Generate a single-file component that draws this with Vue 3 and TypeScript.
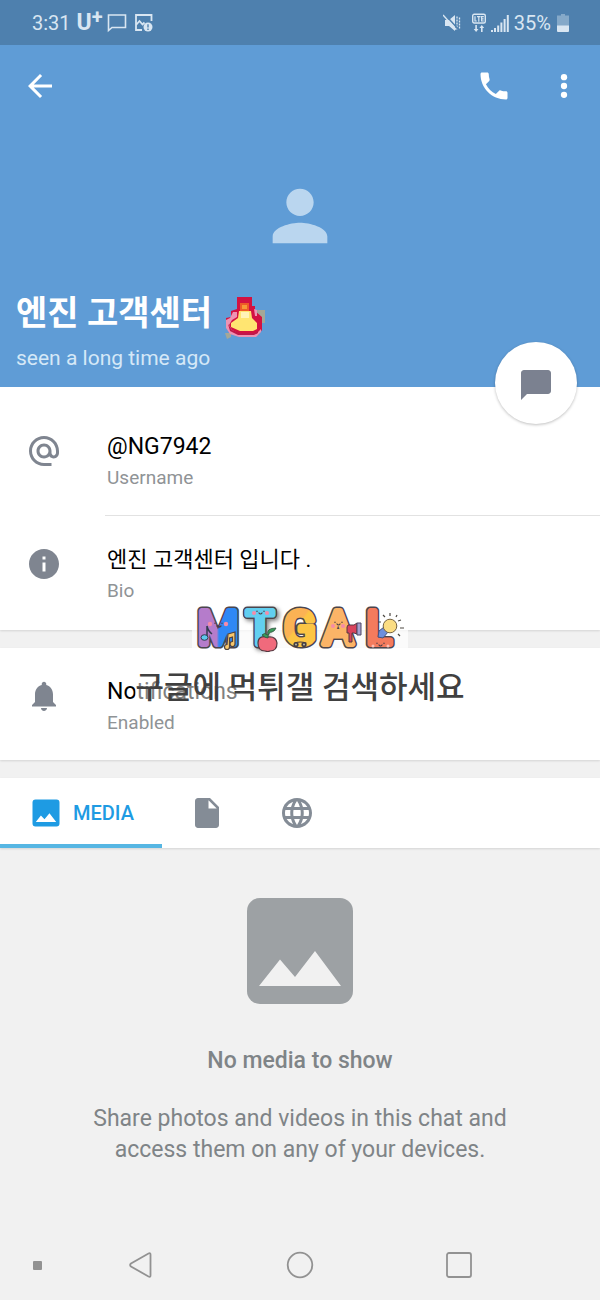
<script setup lang="ts">
import { ref } from 'vue'

interface InfoRow {
  icon: string
  title: string
  label: string
}

const ICONS = {
  at: 'M12 1.95c-5.52 0-10 4.48-10 10s4.48 10 10 10h5v-2h-5c-4.34 0-8-3.66-8-8s3.66-8 8-8 8 3.66 8 8v1.43c0 .79-.71 1.57-1.5 1.57s-1.5-.78-1.5-1.57v-1.43c0-2.76-2.24-5-5-5s-5 2.24-5 5 2.24 5 5 5c1.38 0 2.64-.56 3.54-1.47.65.89 1.77 1.47 2.96 1.47 1.97 0 3.5-1.6 3.5-3.57v-1.43c0-5.52-4.48-10-10-10zm0 13c-1.66 0-3-1.34-3-3s1.34-3 3-3 3 1.34 3 3-1.34 3-3 3z',
  info: 'M12 2C6.48 2 2 6.48 2 12s4.48 10 10 10 10-4.48 10-10S17.52 2 12 2zm1 15h-2v-6h2v6zm0-8h-2V7h2v2z',
  bell: 'M12 22c1.1 0 2-.9 2-2h-4c0 1.1.89 2 2 2zm6-6v-5c0-3.07-1.64-5.64-4.5-6.32V4c0-.83-.67-1.5-1.5-1.5s-1.5.67-1.5 1.5v.68C7.63 5.36 6 7.92 6 11v5l-2 2v1h16v-1l-2-2z',
  image: 'M5 3h14a2 2 0 0 1 2 2v14a2 2 0 0 1-2 2H5a2 2 0 0 1-2-2V5a2 2 0 0 1 2-2zM5.2 18H18.8L14.3 12.2 11 16.2 8.6 13.6z',
  file: 'M6 2c-1.1 0-2 .9-2 2v16c0 1.1.9 2 2 2h12c1.1 0 2-.9 2-2V8l-6-6H6zm7 7V3.5L18.5 9H13z',
  globe: 'M11.99 2C6.47 2 2 6.48 2 12s4.47 10 9.99 10C17.52 22 22 17.52 22 12S17.52 2 11.99 2zm6.93 6h-2.95a15.65 15.65 0 0 0-1.38-3.56A8.03 8.03 0 0 1 18.92 8zM12 4.04c.83 1.2 1.48 2.53 1.91 3.96h-3.82c.43-1.43 1.08-2.76 1.91-3.96zM4.26 14C4.1 13.36 4 12.69 4 12s.1-1.36.26-2h3.38c-.08.66-.14 1.32-.14 2s.06 1.34.14 2H4.26zm.82 2h2.95c.32 1.25.78 2.45 1.38 3.56A7.987 7.987 0 0 1 5.08 16zm2.95-8H5.08a7.987 7.987 0 0 1 4.33-3.56A15.65 15.65 0 0 0 8.03 8zM12 19.96c-.83-1.2-1.48-2.53-1.91-3.96h3.82c-.43 1.43-1.08 2.76-1.91 3.96zM14.34 14H9.66c-.09-.66-.16-1.32-.16-2s.07-1.35.16-2h4.68c.09.65.16 1.32.16 2s-.07 1.34-.16 2zm.25 5.56c.6-1.11 1.06-2.31 1.38-3.56h2.95a8.03 8.03 0 0 1-4.33 3.56zM16.36 14c.08-.66.14-1.32.14-2s-.06-1.34-.14-2h3.38c.16.64.26 1.31.26 2s-.1 1.36-.26 2h-3.38z',
}

const profile: InfoRow[] = [
  { icon: ICONS.at, title: '@NG7942', label: 'Username' },
  { icon: ICONS.info, title: '엔진 고객센터 입니다 .', label: 'Bio' },
]
const notifications: InfoRow = { icon: ICONS.bell, title: 'Notifications', label: 'Enabled' }

const tabs = [
  { id: 'media', text: 'MEDIA', icon: ICONS.image },
  { id: 'files', text: '', icon: ICONS.file },
  { id: 'links', text: '', icon: ICONS.globe },
]
const activeTab = ref('media')
</script>

<template>
  <div class="page">
    <div class="statusbar">
      <span class="clock">3:31</span>
      <span class="carrier">U<sup>+</sup></span>
      <svg class="s-chat" width="20" height="20" viewBox="0 0 20 20" fill="none" stroke="currentColor" stroke-width="1.6">
        <path d="M1.5 2h17v12.500h-13.500l-3.500 3z" />
      </svg>
      <svg class="s-pic" width="20" height="20" viewBox="0 0 20 20">
        <path d="M8 17H2V2h15.500v6M2 12l3.500-4 3 3.500 2-2" fill="none" stroke="currentColor" stroke-width="1.800" />
        <circle cx="14" cy="14" r="4.500" fill="currentColor" />
        <path d="M14 11.200v3.400M14 15.600v1.300" stroke="#4e80ae" stroke-width="1.400" />
      </svg>
      <span class="spacer"></span>
      <svg class="s-mute" width="18" height="18" viewBox="0 0 18 18">
        <path d="M2 6h4l6-5v16l-6-5H2z" fill="currentColor" />
        <path d="M14 2.500v13M16.500 3.500v11" stroke="currentColor" stroke-width="1.300" stroke-dasharray="2 1" />
        <path d="M1.500 0l14 15.500" stroke="#4e80ae" stroke-width="1.500" />
        <path d="M0 1l13 14.500" stroke="currentColor" stroke-width="1.500" />
      </svg>
      <svg class="s-lte" width="14" height="20" viewBox="0 0 14 20">
        <rect x="0.700" y="1.200" width="12.600" height="8.800" rx="1.500" fill="none" stroke="currentColor" stroke-width="1.400" />
        <path d="M3 3.200v4.800h1.800M5 3.700h3.600M6.800 3.700v5M11.800 3.700H9.600V8h2.200M9.600 5.900h2" fill="none" stroke="currentColor" stroke-width="1.200" />
        <path d="M3.300 12h1.600v4h1.600l-2.400 3-2.400-3h1.600zM9 19h1.600v-4h1.600l-2.400-3-2.400 3H9z" fill="currentColor" />
      </svg>
      <svg class="s-signal" width="18" height="18" viewBox="0 0 18 18" fill="currentColor">
        <path d="M0 16h2v2H0zM3 14h2v4H3zM6.200 11.500h2V18h-2zM9.400 8.500h2V18h-2zM12.600 5h2v13h-2zM15.800 1h2v17h-2z" />
      </svg>
      <span class="percent">35%</span>
      <svg class="s-battery" width="12" height="20" viewBox="0 0 12 20" fill="currentColor">
        <path d="M4 1h4v1.500H12V13H0V2.500h4z" opacity="0.400" />
        <path d="M0 12.500h12V18a1 1 0 0 1-1 1H1a1 1 0 0 1-1-1z" />
      </svg>
    </div>

    <header class="hero">
      <div class="toolbar">
        <button type="button" aria-label="Back">
          <svg width="36" height="36" viewBox="0 0 24 24"><path d="M20 11H7.830l5.590-5.590L12 4l-8 8 8 8 1.410-1.410L7.830 13H20v-2z" /></svg>
        </button>
        <span class="spacer"></span>
        <button type="button" aria-label="Call">
          <svg width="36" height="36" viewBox="0 0 24 24"><path d="M6.620 10.790c1.440 2.830 3.760 5.140 6.590 6.590l2.200-2.200c.27-.27.67-.36 1.020-.24 1.120.37 2.330.57 3.570.57.55 0 1 .45 1 1V20c0 .55-.45 1-1 1-9.390 0-17-7.610-17-17 0-.55.45-1 1-1h3.500c.55 0 1 .45 1 1 0 1.250.2 2.450.57 3.570.11.35.03.74-.25 1.020l-2.200 2.200z" /></svg>
        </button>
        <button type="button" aria-label="More options">
          <svg width="36" height="36" viewBox="0 0 24 24"><circle cx="12" cy="6.100" r="2.100" /><circle cx="12" cy="12" r="2.100" /><circle cx="12" cy="17.900" r="2.100" /></svg>
        </button>
      </div>
      <svg class="avatar" width="82" height="82" viewBox="0 0 24 24">
        <path d="M12 12c2.210 0 4-1.790 4-4s-1.790-4-4-4-4 1.790-4 4 1.790 4 4 4zm0 2c-2.670 0-8 1.340-8 4v2h16v-2c0-2.660-5.330-4-8-4z" />
      </svg>
      <div class="identity">
        <h1>엔진 고객센터</h1>
        <svg class="siren" width="40" height="44" viewBox="0 0 40 44" aria-label="siren" role="img">
          <path d="M32 15h8v13h-7zM0 38h6v4l-4 2z" fill="#a4a797" />
          <path d="M12 2h15v9h3v5l7 6v13l-4 5H13l-9-3-3-5v-9l5-1v-6l6-2z" fill="#d31241" />
          <path d="M8 17h4v5l-5 3-3 5 3 5 8 4h16l5-5v3l-5 5H14L5 39l-4-6v-8l4-2zM29 14l3 1v6h-2z" fill="#ee93b3" />
          <path d="M3 29l4 6 8 3h15l3-2v2l-4 2H13l-8-4z" fill="#c01848" />
          <path d="M15 8h9v8h-9z" fill="#ee5a28" />
          <path d="M17 10h5v4h-5z" fill="#f79a38" />
          <path d="M14 16h12l1 7 5 5v6l-4 2H15l-9-4v-4l7-5z" fill="#ffe571" />
          <path d="M16 17h8v6h-8z" fill="#fff3b8" />
        </svg>
      </div>
      <p class="seen">seen a long time ago</p>
      <button type="button" class="fab" aria-label="Send message">
        <svg width="36" height="36" viewBox="0 0 24 24"><path d="M20 2H4c-1.100 0-2 .9-2 2v18l4-4h14c1.100 0 2-.9 2-2V4c0-1.100-.9-2-2-2z" /></svg>
      </button>
    </header>

    <section class="card profile">
      <div v-for="row in profile" :key="row.label" class="row">
        <svg class="row-icon" width="36" height="36" viewBox="0 0 24 24"><path :d="row.icon" /></svg>
        <div class="row-body">
          <div class="title">{{ row.title }}</div>
          <div class="label">{{ row.label }}</div>
        </div>
      </div>
    </section>

    <section class="card">
      <div class="row">
        <svg class="row-icon" width="36" height="36" viewBox="0 0 24 24"><path :d="notifications.icon" /></svg>
        <div class="row-body">
          <div class="title">{{ notifications.title }}</div>
          <div class="label">{{ notifications.label }}</div>
        </div>
      </div>
    </section>

    <div class="card tabs" role="tablist">
      <button
        v-for="tab in tabs"
        :key="tab.id"
        type="button"
        role="tab"
        class="tab"
        :class="{ active: tab.id === activeTab, wide: tab.text }"
        :aria-selected="tab.id === activeTab"
        :aria-label="tab.id"
        @click="activeTab = tab.id"
      >
        <svg width="36" height="36" viewBox="0 0 24 24"><path fill-rule="evenodd" :d="tab.icon" /></svg>
        <span v-if="tab.text">{{ tab.text }}</span>
      </button>
    </div>

    <main class="empty">
      <svg width="106" height="106" viewBox="0 0 106 106">
        <rect width="106" height="106" rx="13" fill="#9da1a4" />
        <path d="M12 88h82L68 53 48 79 33 61.500z" fill="#f1f1f1" />
      </svg>
      <h2>No media to show</h2>
      <p>Share photos and videos in this chat and access them on any of your devices.</p>
    </main>

    <nav class="navbar">
      <span class="dot"></span>
      <button type="button" aria-label="Back">
        <svg width="30" height="30" viewBox="0 0 30 30"><path d="M24.500 4.500v21q0 2-2 1L5 16.500q-1.800-1.500 0-3L22.500 3.500q2-1 2 1z" /></svg>
      </button>
      <button type="button" aria-label="Home">
        <svg width="30" height="30" viewBox="0 0 30 30"><circle cx="15" cy="15" r="12.300" /></svg>
      </button>
      <button type="button" aria-label="Recent apps">
        <svg width="30" height="30" viewBox="0 0 30 30"><rect x="3" y="3" width="24" height="24" rx="2" /></svg>
      </button>
    </nav>

    <div class="watermark">
      <svg class="logo" width="216" height="64" viewBox="-3 -6 216 64">
        <defs>
          <linearGradient id="m-fill" gradientUnits="userSpaceOnUse" x1="2" y1="0" x2="46" y2="0">
            <stop offset="0.450" stop-color="#b57ccb" /><stop offset="0.500" stop-color="#2e88f5" />
          </linearGradient>
          <linearGradient id="g-fill" gradientUnits="userSpaceOnUse" x1="86" y1="0" x2="126" y2="30">
            <stop offset="0.500" stop-color="#fbb254" /><stop offset="0.550" stop-color="#fcc544" />
          </linearGradient>
        </defs>
        <g class="edge" aria-hidden="true">
          <text x="23" y="40">M</text><text x="65" y="40" class="lift">T</text><text x="105" y="40">G</text><text x="143" y="40">A</text><text x="184" y="40">L</text>
        </g>
        <g class="body">
          <text x="23" y="40" fill="url(#m-fill)" stroke="url(#m-fill)">M</text>
          <text x="65" y="40" fill="#62cff0" stroke="#62cff0">T</text>
          <text x="105" y="40" fill="url(#g-fill)" stroke="url(#g-fill)">G</text>
          <text x="143" y="40" fill="#fbb467" stroke="#fbb467">A</text>
          <text x="184" y="40" fill="#f47b5d" stroke="#f47b5d">L</text>
        </g>
        <g fill="#f58ba8">
          <circle cx="15" cy="20" r="2.200" /><circle cx="31" cy="20" r="2.200" />
          <circle cx="59" cy="9" r="2" /><circle cx="72" cy="9" r="2" />
          <circle cx="138" cy="22" r="2" /><circle cx="148" cy="22" r="2" />
          <circle cx="178" cy="42" r="1.500" fill="#ffc1b5" /><circle cx="193" cy="42" r="1.500" fill="#ffc1b5" />
        </g>
        <g fill="none" stroke="#493e48" stroke-width="1.200" stroke-linecap="round">
          <path d="M20 19v.5M27 19v.5M22 22q2 2 4 0M62 7v.5M69 7v.5M64 9q1.500 2 3 0M140 18v.5M147 18v.5M142 20q1.500 2 3 0M182 39v.5M189 39v.5M184 41q1.500 2 3 0" />
          <path d="M100 39q5-2 11 0" />
        </g>
        <g fill="#443d42"><circle cx="101" cy="40.500" r="2.600" /><circle cx="109" cy="40.500" r="2.600" /></g>
        <circle cx="101" cy="40.500" r="1" fill="#bba" /><circle cx="109" cy="40.500" r="1" fill="#bba" />
        <path d="M12 22v11M12 22q1 5 5 8" fill="none" stroke="#333d50" stroke-width="1.500" />
        <ellipse cx="9.500" cy="33.500" rx="3.500" ry="2.800" fill="#5cc8ec" stroke="#333d50" />
        <path d="M33 30l7-2v12a2.500 2.500 0 1 1-2.500-2.500V33l-3 1v9a2.500 2.500 0 1 1-2.500-2.500z" fill="#f7c76c" stroke="#51443d" stroke-width="1.200" />
        <path d="M73 33q-10-2-10 6 0 8 7 8 3 1 5 0 7 0 7-8-1-7-9-6z" fill="#f06a7c" stroke="#553840" stroke-width="1.200" />
        <path d="M73 34q0-6 4-6 3-1 4-4-10 0-8 7-4-3-6 0 3 3 6 3z" fill="#399a59" stroke="#315240" stroke-width="0.800" />
        <path d="M153 21h6l3-2v11l-3-1h-2v9h-3v-9h-2v-6z" fill="#d9435c" stroke="#553840" />
        <path d="M162 19h4v12h-4z" fill="#a5a0cf" stroke="#4e4965" />
        <path d="M184 27l5-4 4 5-5 6-5-1z" fill="#6d8fdd" stroke="#46547e" />
        <circle cx="195" cy="22" r="6.800" fill="#fbdd83" stroke="#756344" />
        <g stroke="#4d4943" stroke-width="1.200"><path d="M195 9v3M188 11l2 2M202 11l-1 2M206 16l-3 1M205 24h4M203 30l2 2M183 18h3" /></g>
      </svg>
      <div class="caption">구글에 먹튀갤 검색하세요</div>
    </div>
  </div>
</template>

<style>
body {
  margin: 0;
  background: #f1f1f1;
}
</style>

<style scoped>
.page {
  position: relative;
  display: flex;
  flex-direction: column;
  min-height: 100vh;
  background: #f1f1f1;
  font-family: Roboto, "Noto Sans CJK KR", sans-serif;
  color: #000;
}
button {
  border: 0;
  padding: 0;
  background: none;
  font: inherit;
  color: inherit;
}
svg {
  display: block;
  flex: none;
}
h1, h2, p {
  margin: 0;
}
.spacer {
  flex: 1;
}
.statusbar {
  display: flex;
  align-items: center;
  height: 45px;
  padding: 0 31px 0 32px;
  background: #4e80ae;
  color: #d9e6f2;
  font-size: 20px;
}
.carrier {
  margin: 0 4px 0 6px;
  font-size: 23px;
  font-weight: 700;
  line-height: 24px;
}
.carrier sup {
  font-size: 20px;
  line-height: 0;
  vertical-align: 6px;
}
.s-pic {
  margin-left: 7px;
}
.s-lte {
  margin-left: 11px;
}
.s-signal {
  margin: 0 5px;
}
.s-battery {
  margin-left: 6px;
}
.hero {
  position: relative;
  padding: 0 16px 15px;
  background: #5f9cd6;
  color: #fff;
}
.toolbar {
  display: flex;
  align-items: center;
  height: 82px;
  padding: 0 2px 0 6px;
}
.toolbar button + button {
  margin-left: 34px;
}
.toolbar svg {
  fill: #fff;
}
.avatar {
  margin: 48px auto 34px;
  fill: #bad6ef;
}
.identity {
  display: flex;
  align-items: center;
  gap: 13px;
  height: 44px;
}
h1 {
  font-size: 34px;
  font-weight: 700;
  line-height: 44px;
}
.siren {
  margin-top: 8px;
}
.seen {
  margin-top: 9px;
  font-size: 21px;
  line-height: 28px;
  color: #d5e8f7;
}
.fab {
  position: absolute;
  right: 23px;
  bottom: -37px;
  display: grid;
  place-items: center;
  width: 82px;
  height: 82px;
  padding-top: 4px;
  border-radius: 50%;
  background: #fff;
  box-shadow: 0 1px 3px rgba(0, 0, 0, 0.25);
}
.fab svg {
  fill: #7b8190;
}
.card {
  margin-bottom: 18px;
  background: #fff;
  box-shadow: 0 1px 2px rgba(0, 0, 0, 0.12);
}
.profile {
  padding: 16px 0 2px;
}
.row {
  display: flex;
  padding-left: 26px;
}
.row-icon {
  margin-top: 30px;
  fill: #7f8590;
}
.row-body {
  flex: 1;
  margin-left: 43px;
  padding: 29px 0 23px 2px;
}
.row:not(:last-child) .row-body {
  border-bottom: 1px solid #e2e2e2;
}
.title {
  font-size: 23px;
  line-height: 30px;
}
.profile .row:last-child .title {
  font-size: 22px;
}
.label {
  margin-top: 2px;
  font-size: 19px;
  line-height: 28px;
  color: #8f9396;
}
.tabs {
  display: flex;
  margin-bottom: 0;
}
.tab {
  display: flex;
  align-items: center;
  justify-content: center;
  width: 90px;
  height: 70px;
  border-bottom: 4px solid transparent;
  box-sizing: border-box;
  padding-top: 3px;
  font-size: 20px;
  font-weight: 500;
}
.tab svg {
  fill: #848c96;
}
.tab.wide {
  width: 162px;
  gap: 9px;
}
.tab.active {
  border-bottom-color: #56b6e3;
  color: #1e9be3;
}
.tab.active svg {
  fill: #1e9be3;
}
.empty {
  display: flex;
  flex-direction: column;
  align-items: center;
  padding: 50px 70px 0;
  text-align: center;
  font-size: 23px;
  line-height: 31px;
  color: #7f8487;
}
.empty h2 {
  margin: 41px 0 27px;
  font-size: 23px;
  font-weight: 500;
  line-height: 31px;
}
.navbar {
  display: grid;
  grid-template-columns: 62px 1fr 1fr 1fr 62px;
  align-items: center;
  justify-items: center;
  height: 70px;
  margin-top: auto;
}
.navbar svg {
  fill: none;
  stroke: #929292;
  stroke-width: 1.8;
}
.dot {
  width: 9px;
  height: 9px;
  margin-left: 12px;
  border-radius: 1px;
  background: #929292;
}
.watermark {
  position: absolute;
  top: 598px;
  left: 0;
  right: 0;
  display: flex;
  flex-direction: column;
  align-items: center;
  pointer-events: none;
}
.logo {
  overflow: visible;
  background: rgba(255, 255, 255, 0.7);
  font-family: Roboto, sans-serif;
  font-size: 46px;
  text-anchor: middle;
}
.edge {
  fill: #4b454c;
  stroke: #4b454c;
  stroke-width: 9px;
  stroke-linejoin: round;
}
.lift {
  filter: drop-shadow(2px 2px 2px rgba(0, 0, 0, 0.5));
}
.body {
  stroke-width: 6px;
  stroke-linejoin: round;
}
.caption {
  margin-top: 4px;
  background: rgba(255, 255, 255, 0.5);
  font-size: 31px;
  font-weight: 500;
  line-height: 44px;
  color: #404040;
  white-space: nowrap;
}
</style>
